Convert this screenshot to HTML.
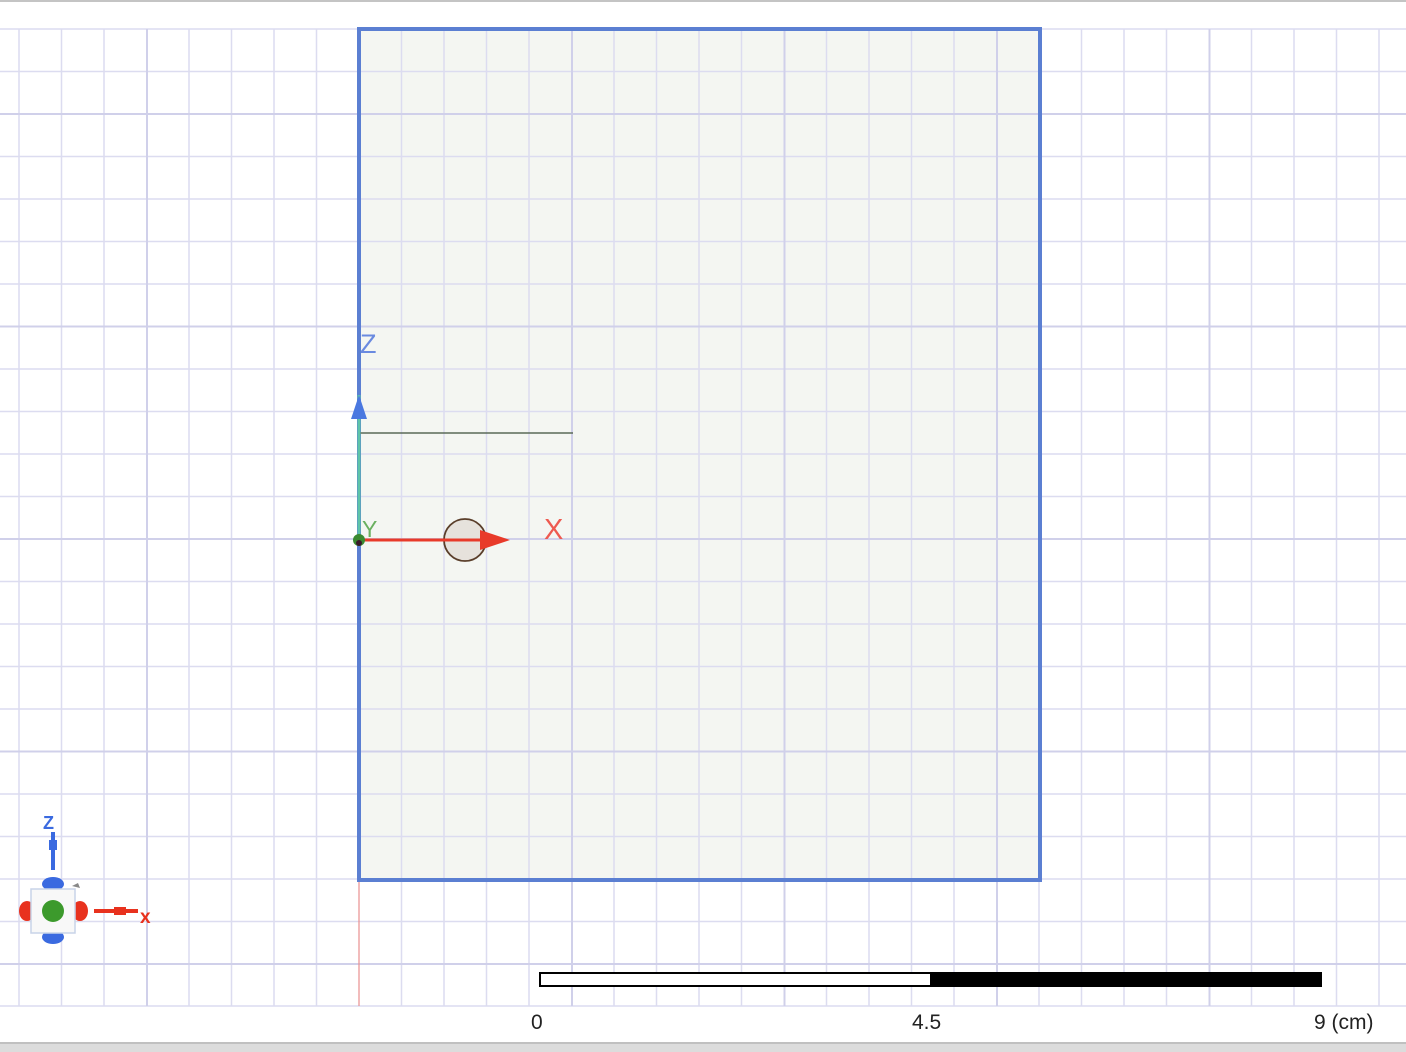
<!DOCTYPE html>
<html><head><meta charset="utf-8"><style>
html,body{margin:0;padding:0;background:#fff;overflow:hidden}
svg{display:block}
text{font-family:"Liberation Sans",sans-serif}
</style></head><body>
<svg width="1406" height="1052" viewBox="0 0 1406 1052" xmlns="http://www.w3.org/2000/svg">
<rect width="1406" height="1052" fill="#ffffff"/>
<rect x="0" y="0" width="1406" height="2" fill="#c4c4c4"/>
<rect x="359" y="29" width="681" height="851" fill="#f4f6f2"/>
<g stroke="#dcdcf0" stroke-width="1.5">
<line x1="19" y1="29" x2="19" y2="1006"/><line x1="61.5" y1="29" x2="61.5" y2="1006"/><line x1="104" y1="29" x2="104" y2="1006"/>
<line x1="189" y1="29" x2="189" y2="1006"/><line x1="231.5" y1="29" x2="231.5" y2="1006"/><line x1="274" y1="29" x2="274" y2="1006"/><line x1="316.5" y1="29" x2="316.5" y2="1006"/>
<line x1="401.5" y1="29" x2="401.5" y2="1006"/><line x1="444" y1="29" x2="444" y2="1006"/><line x1="486.5" y1="29" x2="486.5" y2="1006"/><line x1="529" y1="29" x2="529" y2="1006"/>
<line x1="614" y1="29" x2="614" y2="1006"/><line x1="656.5" y1="29" x2="656.5" y2="1006"/><line x1="699" y1="29" x2="699" y2="1006"/><line x1="741.5" y1="29" x2="741.5" y2="1006"/>
<line x1="826.5" y1="29" x2="826.5" y2="1006"/><line x1="869" y1="29" x2="869" y2="1006"/><line x1="911.5" y1="29" x2="911.5" y2="1006"/><line x1="954" y1="29" x2="954" y2="1006"/>
<line x1="1039" y1="29" x2="1039" y2="1006"/><line x1="1081.5" y1="29" x2="1081.5" y2="1006"/><line x1="1124" y1="29" x2="1124" y2="1006"/><line x1="1166.5" y1="29" x2="1166.5" y2="1006"/>
<line x1="1251.5" y1="29" x2="1251.5" y2="1006"/><line x1="1294" y1="29" x2="1294" y2="1006"/><line x1="1336.5" y1="29" x2="1336.5" y2="1006"/><line x1="1379" y1="29" x2="1379" y2="1006"/>
<line x1="0" y1="29" x2="1406" y2="29"/><line x1="0" y1="71.5" x2="1406" y2="71.5"/><line x1="0" y1="156.5" x2="1406" y2="156.5"/><line x1="0" y1="199" x2="1406" y2="199"/>
<line x1="0" y1="241.5" x2="1406" y2="241.5"/><line x1="0" y1="284" x2="1406" y2="284"/><line x1="0" y1="369" x2="1406" y2="369"/><line x1="0" y1="411.5" x2="1406" y2="411.5"/>
<line x1="0" y1="454" x2="1406" y2="454"/><line x1="0" y1="496.5" x2="1406" y2="496.5"/><line x1="0" y1="581.5" x2="1406" y2="581.5"/><line x1="0" y1="624" x2="1406" y2="624"/>
<line x1="0" y1="666.5" x2="1406" y2="666.5"/><line x1="0" y1="709" x2="1406" y2="709"/><line x1="0" y1="794" x2="1406" y2="794"/><line x1="0" y1="836.5" x2="1406" y2="836.5"/>
<line x1="0" y1="879" x2="1406" y2="879"/><line x1="0" y1="921.5" x2="1406" y2="921.5"/><line x1="0" y1="1006" x2="1406" y2="1006"/>
</g>
<g stroke="#d0d0ea" stroke-width="2">
<line x1="147" y1="29" x2="147" y2="1006"/><line x1="572" y1="29" x2="572" y2="1006"/><line x1="784.5" y1="29" x2="784.5" y2="1006"/><line x1="997" y1="29" x2="997" y2="1006"/><line x1="1209.5" y1="29" x2="1209.5" y2="1006"/>
<line x1="0" y1="114" x2="1406" y2="114"/><line x1="0" y1="326.5" x2="1406" y2="326.5"/><line x1="0" y1="539" x2="1406" y2="539"/><line x1="0" y1="751.5" x2="1406" y2="751.5"/><line x1="0" y1="964" x2="1406" y2="964"/>
</g>
<line x1="359" y1="880" x2="359" y2="1006" stroke="#e89090" stroke-width="1.2"/>
<rect x="359" y="29" width="681" height="851" fill="none" stroke="#5b7fd2" stroke-width="4"/>
<line x1="360" y1="433" x2="573" y2="433" stroke="#5a6a58" stroke-width="1.5"/>
<line x1="359" y1="540" x2="359" y2="395" stroke="#5ec4a8" stroke-width="3"/>
<polygon points="359,395 351,419 367,419" fill="#4a78e0"/>
<text x="360" y="353" font-size="27" fill="#6a8ae0">Z</text>
<circle cx="465" cy="540" r="21" fill="#e6e2dc" stroke="#5a3e2a" stroke-width="1.8"/>
<line x1="360" y1="540" x2="490" y2="540" stroke="#e83a2a" stroke-width="3"/>
<polygon points="480,530 480,550 510,540" fill="#e83a2a"/>
<text x="544" y="539" font-size="29" fill="#ee5a50">X</text>
<text x="362" y="537" font-size="23" fill="#6ab060">Y</text>
<circle cx="359" cy="540" r="6" fill="#3a8a30"/>
<circle cx="359" cy="543" r="3" fill="#3a1a2a"/>
<line x1="53" y1="832" x2="53" y2="870" stroke="#3a6ae0" stroke-width="4"/>
<rect x="49" y="840" width="8" height="10" fill="#3a6ae0"/>
<text x="43" y="829" font-size="18" font-weight="bold" fill="#3a6ae0">Z</text>
<ellipse cx="53" cy="884" rx="11" ry="7" fill="#3a6ae0"/>
<ellipse cx="53" cy="937" rx="11" ry="7" fill="#3a6ae0"/>
<ellipse cx="27" cy="911" rx="8" ry="10" fill="#e8321e"/>
<ellipse cx="80" cy="911" rx="8" ry="10" fill="#e8321e"/>
<rect x="31" y="889" width="44" height="44" fill="#f8f8f8" stroke="#c8d4e8" stroke-width="1.5"/>
<circle cx="53" cy="911" r="11" fill="#3c9a2c"/>
<path d="M72 886 L78 883 L80 888" fill="#888"/>
<line x1="94" y1="911" x2="138" y2="911" stroke="#e8321e" stroke-width="4"/>
<rect x="114" y="907" width="12" height="8" fill="#e8321e"/>
<text x="140" y="923" font-size="19" font-weight="bold" fill="#e8321e">x</text>
<rect x="539" y="972" width="783" height="15" fill="#000"/>
<rect x="541" y="974" width="389" height="11" fill="#fff"/>
<text x="531" y="1029" font-size="21" fill="#222" transform="scale(1,1)">0</text>
<text x="912" y="1029" font-size="21" fill="#222">4.5</text>
<text x="1314" y="1029" font-size="21" fill="#222">9 (cm)</text>
<rect x="0" y="1042" width="1406" height="10" fill="#dcdcdc"/>
<rect x="0" y="1042" width="1406" height="2" fill="#c0c0c0"/>
</svg>
</body></html>
